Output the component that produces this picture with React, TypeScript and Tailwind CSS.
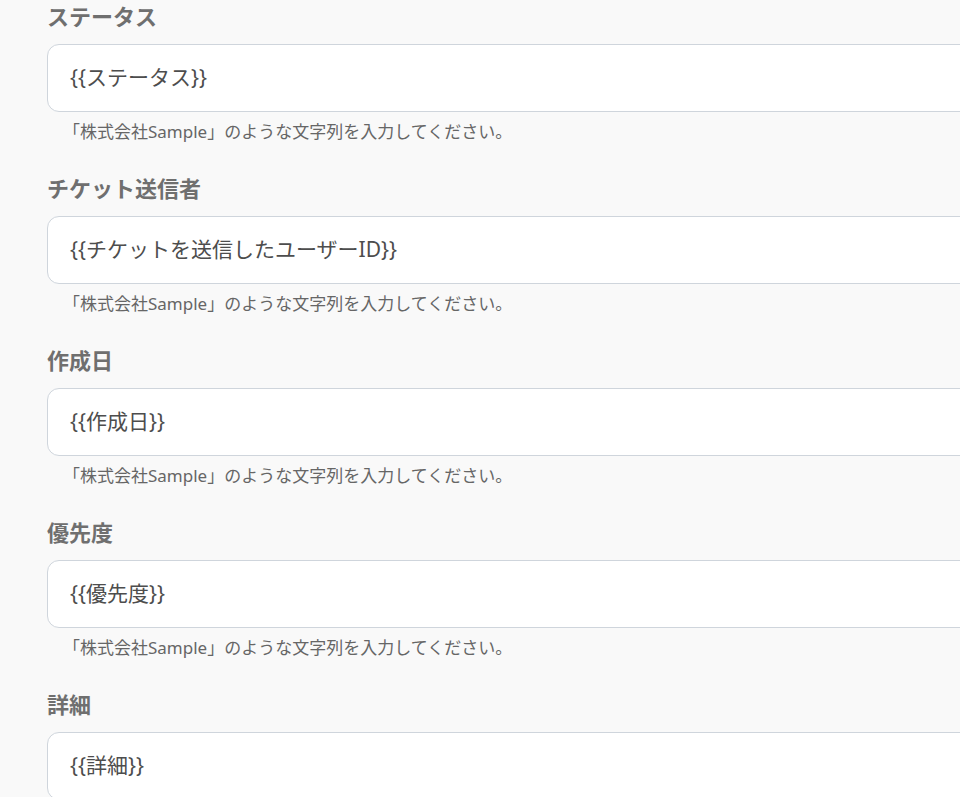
import React from 'react';

const fields = [
  { label: 'ステータス', value: '{{ステータス}}' },
  { label: 'チケット送信者', value: '{{チケットを送信したユーザーID}}' },
  { label: '作成日', value: '{{作成日}}' },
  { label: '優先度', value: '{{優先度}}' },
  { label: '詳細', value: '{{詳細}}' },
];

const FieldRow: React.FC<{ label: string; value: string }> = ({ label, value }) => (
  <div className="mb-[28px]">
    <div className="h-[32px] leading-[32px] text-[22px] font-bold text-[#6f6f6f]">{label}</div>
    <div className="mt-[12px] h-[68px] w-[1000px] rounded-[12px] border border-[#cfd5dc] bg-white flex items-center pl-[22px]">
      <span className="text-[21px] text-[#4d4d4d]">{value}</span>
    </div>
    <div className="mt-[8px] h-[24px] leading-[24px] pl-[16px] text-[17px] text-[#666666]">
      「株式会社Sample」のような文字列を入力してください。
    </div>
  </div>
);

export default function App() {
  return (
    <div
      className="w-[960px] h-[797px] overflow-hidden bg-[#f9f9f9] pl-[47px]"
      style={{ fontFamily: '"Noto Sans", "Noto Sans CJK JP", sans-serif' }}
    >
      {fields.map((f) => (
        <FieldRow key={f.label} label={f.label} value={f.value} />
      ))}
    </div>
  );
}
